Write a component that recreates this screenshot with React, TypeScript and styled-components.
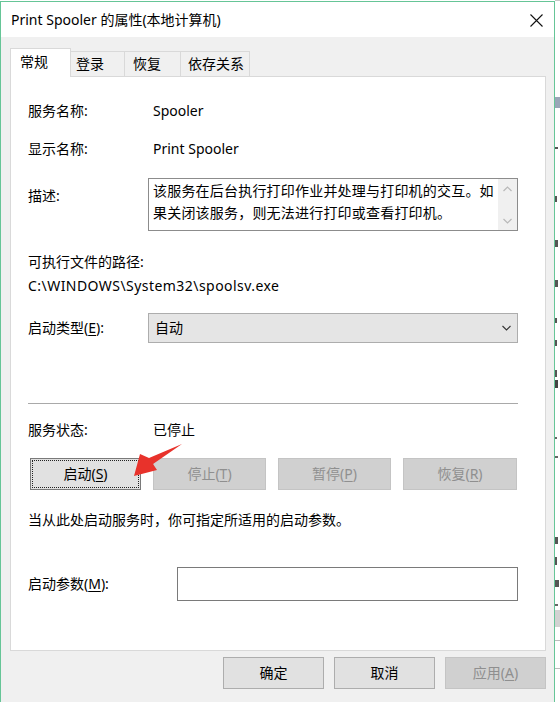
import React from "react";
import styled, { createGlobalStyle, css } from "styled-components";

const Global = createGlobalStyle`
  html, body { margin: 0; padding: 0; background: #ffffff; }
  body {
    font-family: "Noto Sans", "Noto Sans CJK SC", sans-serif;
    font-size: 14px;
    color: #000;
  }
  * { box-sizing: border-box; }
`;

const Page = styled.div`
  width: 560px;
  height: 702px;
  display: flex;
  overflow: hidden;
  background: #ffffff;
`;

const Window = styled.div`
  width: 555px;
  height: 702px;
  margin-top: 1px;
  border: 1px solid #66c597;
  border-bottom: none;
  background: #f0f0f0;
  display: flex;
  flex-direction: column;
  flex-shrink: 0;
`;

const TitleBar = styled.div`
  height: 35px;
  background: #ffffff;
  display: flex;
  align-items: center;
  justify-content: space-between;
  padding: 1px 11px 0 10px;
  line-height: 20px;
`;

const TitleText = styled.span`
  font-size: 14px;
  color: #000;
`;

const CloseIcon = styled.svg`
  width: 13px;
  height: 13px;
  display: block;
`;

const TabRow = styled.div`
  margin-top: 11px;
  padding-left: 9px;
  height: 28px;
  display: flex;
  align-items: flex-end;
  position: relative;
  z-index: 1;
`;

const Tab = styled.div<{ $w: number; $pl: number; $active?: boolean }>`
  width: ${(p) => p.$w}px;
  padding-left: ${(p) => p.$pl}px;
  line-height: 20px;
  white-space: nowrap;
  ${(p) =>
    p.$active
      ? css`
          height: 29px;
          margin-bottom: -1px;
          background: #ffffff;
          border: 1px solid #d9d9d9;
          border-bottom: none;
          padding-top: 3px;
        `
      : css`
          height: 25px;
          background: #f0f0f0;
          border-top: 1px solid #d9d9d9;
          border-right: 1px solid #d9d9d9;
          padding-top: 2px;
        `}
`;

const Panel = styled.div`
  margin-left: 9px;
  width: 536px;
  height: 575px;
  background: #ffffff;
  border: 1px solid #d9d9d9;
  padding: 24px 27px 0 17px;
  display: flex;
  flex-direction: column;
`;

const InfoRow = styled.div<{ $mt: number; $cols?: string }>`
  margin-top: ${(p) => p.$mt}px;
  display: grid;
  grid-template-columns: ${(p) => p.$cols ?? "120px 1fr"};
  align-items: start;
  line-height: 20px;
  white-space: nowrap;
`;

const Label = styled.div<{ $pt?: number }>`
  padding-top: ${(p) => p.$pt ?? 0}px;
`;

const Value = styled.div`
  padding-left: 5px;
`;

const PlainLine = styled.div<{ $mt: number; $ls?: number }>`
  margin-top: ${(p) => p.$mt}px;
  line-height: 20px;
  white-space: nowrap;
  letter-spacing: ${(p) => p.$ls ?? 0}px;
`;

const DescBox = styled.div`
  height: 53px;
  border: 1px solid #8c8c8c;
  background: #fff;
  display: flex;
`;

const DescText = styled.div`
  flex: 1;
  padding: 1px 0 0 4px;
  line-height: 22px;
  white-space: nowrap;
  overflow: hidden;
  letter-spacing: 0.2px;
`;

const ScrollBar = styled.div`
  width: 19px;
  background: #f0f0f0;
  display: flex;
  flex-direction: column;
  justify-content: space-between;
  align-items: center;
  padding: 7px 0 6px;
`;

const Chevron = styled.svg`
  width: 9px;
  height: 6px;
  display: block;
`;

const Select = styled.div`
  height: 30px;
  border: 1px solid #adadad;
  background: #e5e5e5;
  display: flex;
  align-items: center;
  justify-content: space-between;
  padding: 0 6px 0 6px;
`;

const Separator = styled.div`
  margin-top: 60px;
  height: 1px;
  background: #a9a9a9;
`;

const ButtonGrid = styled.div`
  margin: 18px 1px 0 2px;
  display: grid;
  grid-template-columns: 111px 113px 113px 114px;
  justify-content: space-between;
  position: relative;
`;

const Button = styled.div<{ $disabled?: boolean; $focused?: boolean; $w?: number }>`
  position: relative;
  height: 32px;
  ${(p) => (p.$w ? `width: ${p.$w}px;` : "")}
  display: flex;
  align-items: center;
  justify-content: center;
  line-height: 20px;
  white-space: nowrap;
  border: 1px solid ${(p) => (p.$disabled ? "#c4c4c4" : "#adadad")};
  background: ${(p) => (p.$disabled ? "#d0d0d0" : "#e1e1e1")};
  color: ${(p) => (p.$disabled ? "#8f8f8f" : "#000")};
  ${(p) =>
    p.$focused &&
    css`
      border-color: #7a7a7a;
      &::after {
        content: "";
        position: absolute;
        inset: 1px;
        border: 1px dotted #222;
      }
    `}
`;

const U = styled.span`
  text-decoration: underline;
  text-underline-offset: 2px;
`;

const Arrow = styled.svg`
  position: absolute;
  left: 98px;
  top: -13px;
  width: 60px;
  height: 40px;
  overflow: visible;
  pointer-events: none;
`;

const TextInput = styled.div`
  height: 34px;
  border: 1px solid #7a7a7a;
  background: #fff;
`;

const Footer = styled.div`
  margin-top: 6px;
  padding-right: 8px;
  display: flex;
  justify-content: flex-end;
  gap: 10px;
`;

const BackStrip = styled.div`
  flex: 1;
  position: relative;
  background: #ffffff;
`;

const BackMark = styled.div<{ $h: number; $c: string; $w: number }>`
  position: absolute;
  left: 0;
  width: ${(p) => p.$w}px;
  height: ${(p) => p.$h}px;
  background: ${(p) => p.$c};
`;

const backMarks = [
  { y: 0, h: 1, w: 5, c: "#c8c8c8" },
  { y: 97, h: 11, w: 5, c: "#9aa6b8" },
  { y: 147, h: 2, w: 3, c: "#555" },
  { y: 196, h: 6, w: 2, c: "#555" },
  { y: 240, h: 7, w: 3, c: "#555" },
  { y: 280, h: 7, w: 3, c: "#555" },
  { y: 318, h: 5, w: 2, c: "#555" },
  { y: 340, h: 6, w: 2, c: "#555" },
  { y: 370, h: 7, w: 2, c: "#555" },
  { y: 380, h: 8, w: 3, c: "#444" },
  { y: 437, h: 2, w: 2, c: "#666" },
  { y: 456, h: 2, w: 3, c: "#666" },
  { y: 537, h: 7, w: 3, c: "#555" },
  { y: 557, h: 8, w: 2, c: "#555" },
  { y: 580, h: 7, w: 4, c: "#555" },
  { y: 604, h: 2, w: 3, c: "#666" },
  { y: 610, h: 17, w: 5, c: "#d2d2d2" },
  { y: 640, h: 1, w: 5, c: "#bcbcbc" },
  { y: 668, h: 1, w: 5, c: "#bcbcbc" },
];

export default function App() {
  return (
    <>
      <Global />
      <Page>
        <Window>
          <TitleBar>
            <TitleText>Print Spooler 的属性(本地计算机)</TitleText>
            <CloseIcon viewBox="0 0 13 13">
              <path d="M0.5 0.5 L12.5 12.5 M12.5 0.5 L0.5 12.5" stroke="#111" strokeWidth="1.1" fill="none" />
            </CloseIcon>
          </TitleBar>

          <TabRow>
            <Tab $w={61} $pl={9} $active>常规</Tab>
            <Tab $w={54} $pl={5}>登录</Tab>
            <Tab $w={56} $pl={8}>恢复</Tab>
            <Tab $w={69} $pl={7}>依存关系</Tab>
          </TabRow>

          <Panel>
            <InfoRow $mt={0}>
              <Label>服务名称:</Label>
              <Value>Spooler</Value>
            </InfoRow>
            <InfoRow $mt={18}>
              <Label>显示名称:</Label>
              <Value>Print Spooler</Value>
            </InfoRow>
            <InfoRow $mt={19}>
              <Label $pt={8}>描述:</Label>
              <DescBox>
                <DescText>
                  该服务在后台执行打印作业并处理与打印机的交互。如
                  <br />
                  果关闭该服务，则无法进行打印或查看打印机。
                </DescText>
                <ScrollBar>
                  <Chevron viewBox="0 0 9 6">
                    <path d="M0.5 5 L4.5 1 L8.5 5" stroke="#b8b8b8" strokeWidth="1.2" fill="none" />
                  </Chevron>
                  <Chevron viewBox="0 0 9 6">
                    <path d="M0.5 1 L4.5 5 L8.5 1" stroke="#b8b8b8" strokeWidth="1.2" fill="none" />
                  </Chevron>
                </ScrollBar>
              </DescBox>
            </InfoRow>

            <PlainLine $mt={21}>可执行文件的路径:</PlainLine>
            <PlainLine $mt={4} $ls={0.45}>C:\WINDOWS\System32\spoolsv.exe</PlainLine>

            <InfoRow $mt={17}>
              <Label $pt={5}>
                启动类型(<U>E</U>):
              </Label>
              <Select>
                <span>自动</span>
                <Chevron viewBox="0 0 9 6">
                  <path d="M0.5 1 L4.5 5 L8.5 1" stroke="#333" strokeWidth="1.1" fill="none" />
                </Chevron>
              </Select>
            </InfoRow>

            <Separator />

            <InfoRow $mt={16}>
              <Label>服务状态:</Label>
              <Value>已停止</Value>
            </InfoRow>

            <ButtonGrid>
              <Button $focused>
                启动(<U>S</U>)
              </Button>
              <Button $disabled>
                停止(<U>T</U>)
              </Button>
              <Button $disabled>
                暂停(<U>P</U>)
              </Button>
              <Button $disabled>
                恢复(<U>R</U>)
              </Button>
              <Arrow viewBox="0 0 60 40">
                <polygon
                  points="6,31 12,9 21,13 54,-1 25,19 29,25"
                  fill="#e8322b"
                />
              </Arrow>
            </ButtonGrid>

            <PlainLine $mt={20}>当从此处启动服务时，你可指定所适用的启动参数。</PlainLine>

            <InfoRow $mt={37} $cols="149px 1fr">
              <Label $pt={7}>
                启动参数(<U>M</U>):
              </Label>
              <TextInput />
            </InfoRow>
          </Panel>

          <Footer>
            <Button $w={101}>确定</Button>
            <Button $w={101}>取消</Button>
            <Button $w={101} $disabled>
              应用(<U>A</U>)
            </Button>
          </Footer>
        </Window>
        <BackStrip>
          {backMarks.map((m, i) => (
            <BackMark key={i} $h={m.h} $w={m.w} $c={m.c} style={{ top: m.y }} />
          ))}
        </BackStrip>
      </Page>
    </>
  );
}
